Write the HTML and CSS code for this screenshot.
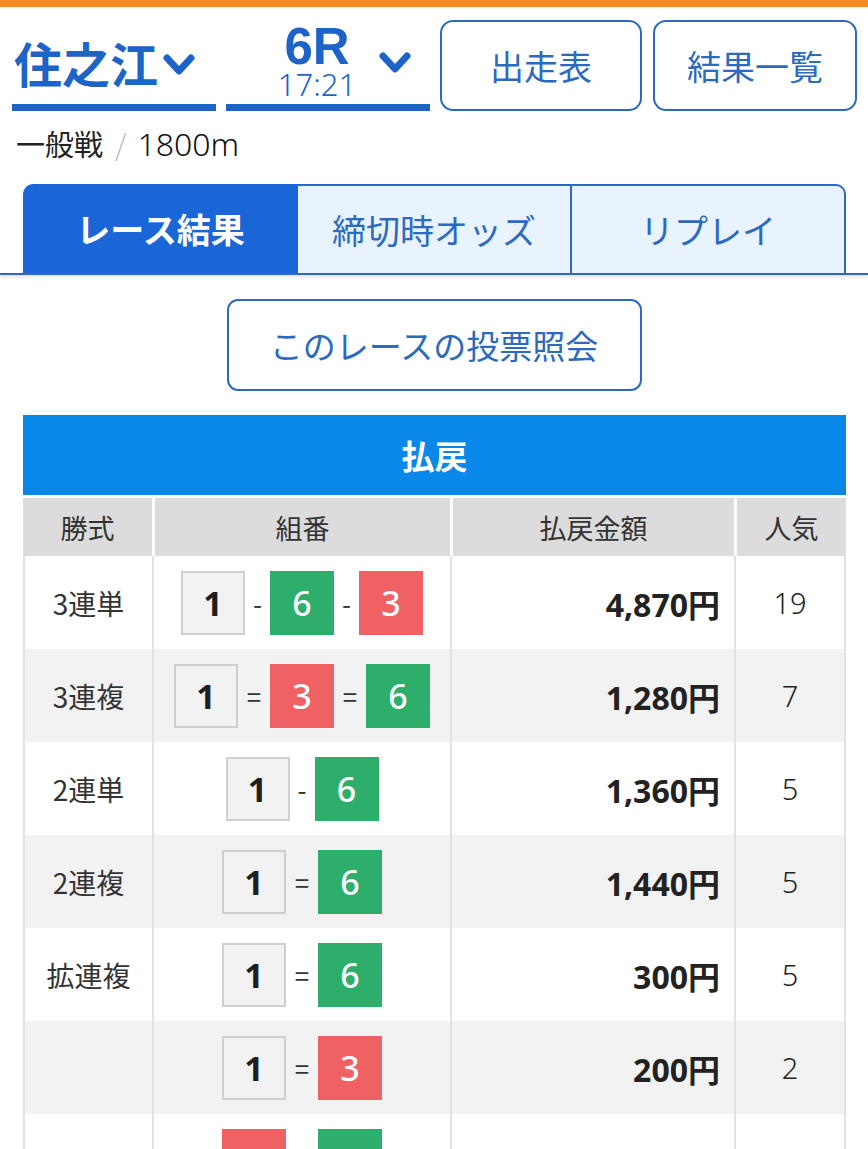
FILE: index.html
```html
<!DOCTYPE html>
<html lang="ja">
<head>
<meta charset="utf-8">
<link rel="stylesheet" href="styles.css">
</head>
<body>
<div class="topbar"></div>
<header class="head">
  <div class="selector sel-place">
    <span class="place">住之江</span>
    <svg class="chev" width="34" height="24" viewBox="0 0 34 24"><polyline points="5,5 17,18 29,5" fill="none" stroke="#1e64c8" stroke-width="7" stroke-linecap="round" stroke-linejoin="round"/></svg>
  </div>
  <div class="selector sel-race">
    <div class="race-block">
      <span class="race-no">6R</span>
      <span class="race-time">17:21</span>
    </div>
    <svg class="chev chev-race" width="34" height="24" viewBox="0 0 34 24"><polyline points="5,5 17,18 29,5" fill="none" stroke="#1e64c8" stroke-width="7" stroke-linecap="round" stroke-linejoin="round"/></svg>
  </div>
  <a class="head-btn">出走表</a>
  <a class="head-btn">結果一覧</a>
</header>
<p class="race-info">一般戦<span class="slash">/</span><span class="dist">1800m</span></p>
<nav class="tabs-wrap">
  <div class="tabs">
    <div class="tab active">レース結果</div>
    <div class="tab">締切時オッズ</div>
    <div class="tab last">リプレイ</div>
  </div>
</nav>
<div class="vote-row"><a class="vote-btn">このレースの投票照会</a></div>
<section class="payout">
  <div class="payout-title">払戻</div>
  <table class="ptable">
    <thead>
      <tr><th class="c1">勝式</th><th class="c2">組番</th><th class="c3">払戻金額</th><th class="c4">人気</th></tr>
    </thead>
    <tbody>
      <tr>
        <td class="kind">3連単</td>
        <td><div class="combo"><span class="box gray">1</span><span class="sep">-</span><span class="box green">6</span><span class="sep">-</span><span class="box red">3</span></div></td>
        <td class="amount">4,870円</td><td class="pop">19</td>
      </tr>
      <tr class="alt">
        <td class="kind">3連複</td>
        <td><div class="combo"><span class="box gray">1</span><span class="sep eq">=</span><span class="box red">3</span><span class="sep eq">=</span><span class="box green">6</span></div></td>
        <td class="amount">1,280円</td><td class="pop">7</td>
      </tr>
      <tr>
        <td class="kind">2連単</td>
        <td><div class="combo"><span class="box gray">1</span><span class="sep">-</span><span class="box green">6</span></div></td>
        <td class="amount">1,360円</td><td class="pop">5</td>
      </tr>
      <tr class="alt">
        <td class="kind">2連複</td>
        <td><div class="combo"><span class="box gray">1</span><span class="sep eq">=</span><span class="box green">6</span></div></td>
        <td class="amount">1,440円</td><td class="pop">5</td>
      </tr>
      <tr>
        <td class="kind">拡連複</td>
        <td><div class="combo"><span class="box gray">1</span><span class="sep eq">=</span><span class="box green">6</span></div></td>
        <td class="amount">300円</td><td class="pop">5</td>
      </tr>
      <tr class="alt">
        <td class="kind"></td>
        <td><div class="combo"><span class="box gray">1</span><span class="sep eq">=</span><span class="box red">3</span></div></td>
        <td class="amount">200円</td><td class="pop">2</td>
      </tr>
      <tr>
        <td class="kind"></td>
        <td><div class="combo"><span class="box red">3</span><span class="sep eq">=</span><span class="box green">6</span></div></td>
        <td class="amount">890円</td><td class="pop">15</td>
      </tr>
    </tbody>
  </table>
</section>
</body>
</html>
```

FILE: styles.css
```css
* { box-sizing: border-box; }
html, body {
  margin: 0;
  padding: 0;
  background: #fff;
  font-family: "Noto Sans CJK JP", "Noto Sans", sans-serif;
  color: #222;
}
body { width: 868px; overflow: hidden; }

.topbar {
  height: 7px;
  background: #f68a20;
}

.head {
  display: flex;
  padding: 13px 11px 0 12px;
  height: 104px;
}
.selector {
  width: 204px;
  height: 91px;
  display: flex;
  align-items: center;
  border-bottom: 7px solid #1e64c8;
  color: #1e64c8;
}
.sel-place { padding-left: 2px; margin-right: 10px; }
.place {
  font-size: 48px;
  font-weight: 700;
  line-height: 1;
}
.chev { margin-left: 4px; margin-top: 6px; }
.sel-race { padding-left: 48px; margin-right: 10px; }
.race-block {
  display: flex;
  flex-direction: column;
  align-items: center;
  width: 86px;
}
.race-no {
  font-family: "Liberation Sans", "Noto Sans", sans-serif;
  font-size: 51px;
  font-weight: 700;
  line-height: 42px;
}
.race-time {
  font-family: "Noto Sans", "Noto Sans CJK JP", sans-serif;
  font-size: 31px;
  font-weight: 300;
  line-height: 28px;
  margin-top: 2px;
}
.chev-race { margin-left: 18px; margin-top: 2px; }

.head-btn {
  width: 202px;
  height: 91px;
  border: 2px solid #2c6abf;
  border-radius: 13px;
  display: flex;
  align-items: center;
  justify-content: center;
  font-size: 34px;
  color: #2c6abf;
  margin-right: 11px;
}
.head-btn:last-child { margin-right: 0; width: 204px; }

.race-info {
  margin: 14px 0 0 16px;
  font-size: 29px;
  line-height: 36px;
  color: #222;
}
.slash { color: #bbb; margin: 0 11px 0 12px; font-weight: 300; }
.dist {
  font-family: "Noto Sans", "Noto Sans CJK JP", sans-serif;
  font-size: 32px;
  font-weight: 300;
  color: #111;
}

.tabs-wrap {
  margin-top: 22px;
  padding: 0 22px 0 23px;
  border-bottom: 2px solid #2c6abf;
  box-shadow: 0 2px 3px rgba(0,0,0,0.12);
}
.tabs { display: flex; height: 89px; }
.tab {
  flex: 1;
  display: flex;
  align-items: center;
  justify-content: center;
  font-size: 34px;
  color: #2c6abf;
  background: #e9f3fd;
  border-top: 2px solid #2c6abf;
  border-right: 2px solid #2c6abf;
}
.tab.active {
  background: #1a66d6;
  color: #fff;
  font-weight: 700;
  border: none;
  border-top-left-radius: 10px;
  flex: 0 0 275px;
}
.tab.last { border-top-right-radius: 10px; }

.vote-row {
  display: flex;
  justify-content: center;
  margin-top: 24px;
}
.vote-btn {
  width: 415px;
  height: 92px;
  border: 2px solid #2c6abf;
  border-radius: 11px;
  display: flex;
  align-items: center;
  justify-content: center;
  font-size: 33px;
  color: #2c6abf;
}

.payout { margin: 24px 22px 0 23px; }
.payout-title {
  height: 80px;
  background: #0a88e9;
  color: #fff;
  font-size: 33px;
  font-weight: 700;
  display: flex;
  align-items: center;
  justify-content: center;
  margin-bottom: 3px;
}
.ptable {
  width: 100%;
  border-collapse: separate;
  border-spacing: 0;
  table-layout: fixed;
}
.ptable th {
  height: 58px;
  background: #dcdcdc;
  font-weight: 400;
  font-size: 27px;
  color: #333;
  border-left: 3px solid #fff;
  padding: 0;
}
.ptable th.c1 { border-left: none; }
.c1 { width: 129px; }
.c2 { width: 298px; }
.c3 { width: 284px; }
.c4 { width: 112px; }
.ptable td {
  height: 93px;
  padding: 0;
  border-left: 2px solid #e2e2e2;
  vertical-align: middle;
}
.ptable td:last-child { border-right: 2px solid #e2e2e2; }
.ptable tr.alt td { background: #f2f2f2; }
.kind {
  text-align: center;
  font-size: 28px;
  color: #333;
}
.combo {
  display: flex;
  justify-content: center;
  align-items: center;
  gap: 8px;
}
.box {
  width: 64px;
  height: 64px;
  display: flex;
  align-items: center;
  justify-content: center;
  font-family: "Noto Sans", "Noto Sans CJK JP", sans-serif;
  font-size: 34px;
  font-weight: 500;
  color: #fff;
}
.box.gray {
  background: #f2f2f2;
  border: 2px solid #cfcfcf;
  color: #1e1e1e;
  font-weight: 700;
}
.box.green { background: #2eae6b; }
.box.red { background: #f06163; }
.sep {
  font-size: 26px;
  color: #333;
  width: 9px;
  text-align: center;
}
.sep.eq { width: 16px; }
.amount {
  text-align: right;
  padding-right: 14px !important;
  font-family: "Noto Sans", "Noto Sans CJK JP", sans-serif;
  font-size: 32px;
  font-weight: 700;
  color: #222;
}
.pop {
  text-align: center;
  font-family: "Noto Sans", "Noto Sans CJK JP", sans-serif;
  font-size: 29px;
  font-weight: 300;
  color: #222;
}
```
